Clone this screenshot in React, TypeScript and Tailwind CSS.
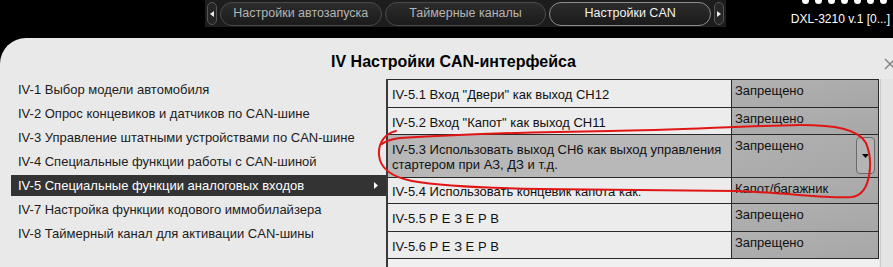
import React from 'react';

const TABS = ['Настройки автозапуска', 'Таймерные каналы', 'Настройки CAN'];

const MENU = [
  'IV-1 Выбор модели автомобиля',
  'IV-2 Опрос концевиков и датчиков по CAN-шине',
  'IV-3 Управление штатными устройствами по CAN-шине',
  'IV-4 Специальные функции работы с CAN-шиной',
  'IV-5 Специальные функции аналоговых входов',
  'IV-7 Настройка функции кодового иммобилайзера',
  'IV-8 Таймерный канал для активации CAN-шины',
];

interface Row {
  label: string[];
  value: string;
  h: string;
  selected?: boolean;
}

const ROWS: Row[] = [
  { label: ['IV-5.1 Вход "Двери" как выход CH12'], value: 'Запрещено', h: 'h-[28px]' },
  { label: ['IV-5.2 Вход "Капот" как выход CH11'], value: 'Запрещено', h: 'h-[27px]' },
  {
    label: ['IV-5.3 Использовать выход CH6 как выход управления', 'стартером при АЗ, ДЗ и т.д.'],
    value: 'Запрещено',
    h: 'h-[43px]',
    selected: true,
  },
  { label: ['IV-5.4 Использовать концевик капота как:'], value: 'Капот/багажник', h: 'h-[26px]' },
  { label: ['IV-5.5 Р Е З Е Р В'], value: 'Запрещено', h: 'h-[28px]' },
  { label: ['IV-5.6 Р Е З Е Р В'], value: 'Запрещено', h: 'h-[27px]' },
];

function ArrowButton({ dir }: { dir: 'left' | 'right' }) {
  return (
    <div className="w-[10px] h-[23px] rounded-full border border-[#555] bg-[#262626] flex items-center justify-center shrink-0">
      <svg width="4" height="6" viewBox="0 0 4 6">
        {dir === 'left' ? <path d="M4 0 L0 3 L4 6 Z" fill="#eee" /> : <path d="M0 0 L4 3 L0 6 Z" fill="#eee" />}
      </svg>
    </div>
  );
}

export default function App() {
  return (
    <div
      className="relative w-[893px] h-[267px] overflow-hidden bg-black flex flex-col"
      style={{ fontFamily: '"Liberation Sans", Arial, sans-serif' }}
    >
      {/* верхняя панель с вкладками */}
      <div className="h-[30px] shrink-0 flex">
        <div className="ml-[205px] w-[521px] h-[27px] bg-[#1d1d1d] flex items-center gap-[3px] px-[2px]">
          <ArrowButton dir="left" />
          {TABS.map((t, i) => {
            const active = i === TABS.length - 1;
            return (
              <div
                key={t}
                className={`w-[163px] h-[24px] rounded-full border flex items-center justify-center text-[12.5px] bg-gradient-to-b from-[#2c2c2c] to-[#1b1b1b] ${
                  active ? 'border-[#8c8c8c] text-[#f2f2f2]' : 'border-[#4a4a4a] text-[#b4b4b4]'
                }`}
              >
                {t}
              </div>
            );
          })}
          <ArrowButton dir="right" />
        </div>
        <div className="ml-auto mr-[3px] flex flex-col items-end">
          {/* точки индикатора, обрезанные верхним краем */}
          <svg className="mr-[2px] shrink-0" width="86" height="5" viewBox="0 0 86 5">
            {Array.from({ length: 7 }, (_, i) => (
              <circle key={i} cx={3.5 + i * 13} cy={0.5} r={3.5} fill="#ffffff" />
            ))}
          </svg>
          <div className="mt-[7px] text-[12px] leading-[14px] text-white">DXL-3210 v.1 [0...]</div>
        </div>
      </div>

      {/* основная панель */}
      <div className="flex-1 bg-gradient-to-b from-black via-[#5a5a5a] to-[#a0a0a0] flex flex-col">
        <div className="mt-[8px] flex-1 bg-[#e9e9e9] rounded-tl-[26px] flex flex-col">
          <div className="relative h-[41px] shrink-0 pt-[14px] text-center text-[16px] leading-[20px] font-bold text-black">
            <span className="ml-[14px]">IV Настройки CAN-интерфейса</span>
            <svg className="absolute right-[-3px] top-[20px]" width="12" height="12" viewBox="0 0 12 12">
              <path d="M1 1 L11 11 M11 1 L1 11" stroke="#808080" strokeWidth="1.4" />
            </svg>
          </div>

          <div className="flex-1 flex pl-[11px]">
            {/* меню слева */}
            <div className="w-[375px] flex flex-col gap-[3px]">
              {MENU.map((m, i) => {
                const sel = i === 4;
                return (
                  <div
                    key={m}
                    className={`h-[21px] flex items-center pl-[7px] pr-[8px] text-[13px] ${
                      sel ? 'bg-[#333333] text-white' : 'text-[#1c1c1c]'
                    }`}
                  >
                    <span className="flex-1">{m}</span>
                    {sel && (
                      <svg width="4" height="7" viewBox="0 0 4 7">
                        <path d="M0 0 L4 3.5 L0 7 Z" fill="#fff" />
                      </svg>
                    )}
                  </div>
                );
              })}
            </div>

            {/* таблица параметров */}
            <div className="w-[493px] border-l-2 border-[#3a3a3a] bg-[#f0f0f0]">
              <div className="border-t border-r border-[#2a2a2a]">
                {ROWS.map((r, i) => (
                  <div key={i} className={`${r.h} flex border-b border-[#2a2a2a]`}>
                    <div
                      className={`flex-1 flex flex-col justify-center pl-[4px] pt-[2px] text-[13px] leading-[15px] text-[#111] ${
                        r.selected ? 'bg-[#b8b8b8]' : 'bg-[#ececec]'
                      }`}
                    >
                      {r.label.map((l) => (
                        <div key={l}>{l}</div>
                      ))}
                    </div>
                    <div className="w-[147px] border-l border-[#2a2a2a] bg-gradient-to-br from-[#b2b2b2] to-[#a6a6a6] flex pl-[3px] pr-[3px] pt-[3px]">
                      <span className="flex-1 text-[13px] leading-[15px] text-[#111]">{r.value}</span>
                      {r.selected && (
                        <div className="w-[19px] h-[37px] -mt-[1px] rounded-[4px] border border-[#6a6a6a] bg-[#b4b4b4] flex items-center justify-center">
                          <svg width="7" height="4" viewBox="0 0 7 4">
                            <path d="M0 0 L7 0 L3.5 4 Z" fill="#000" />
                          </svg>
                        </div>
                      )}
                    </div>
                  </div>
                ))}
              </div>
            </div>
            <div className="flex-1 border-l border-[#c8c8c8] ml-[1px] bg-[#e4e4e4]" />
          </div>
        </div>
      </div>

      {/* красная пометка от руки */}
      <svg className="absolute inset-0 pointer-events-none" width="893" height="267" viewBox="0 0 893 267">
        <path
          d="M396 131 C386 133 378 142 379 155 C380 168 392 177 412 181 C440 186 480 188 540 189 L735 191 C790 193 830 199 852 197 C872 194 873 160 866 143 C858 129 835 125 800 125 C740 126 680 130 610 131 C530 132 450 135 400 138 C392 139 386 141 382 144"
          fill="none"
          stroke="#e01616"
          strokeWidth="2"
          strokeLinecap="round"
        />
      </svg>
    </div>
  );
}
